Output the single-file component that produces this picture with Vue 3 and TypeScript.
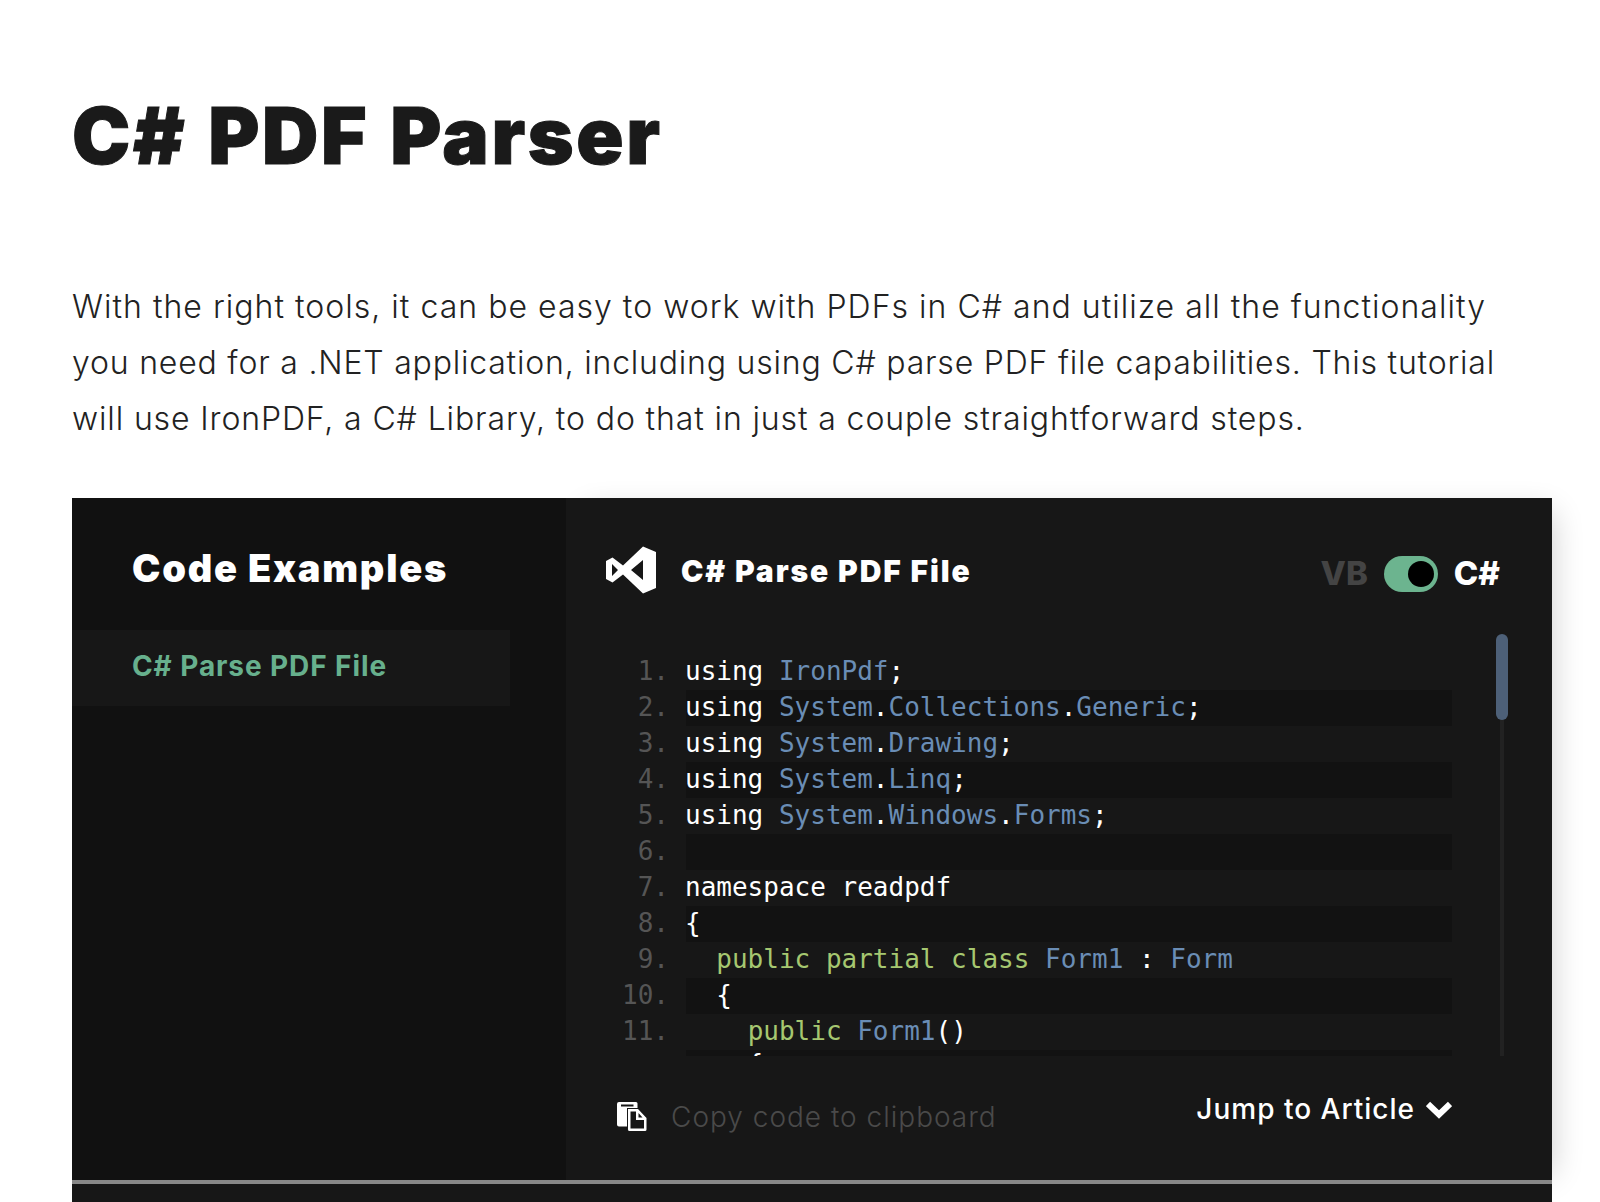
<script setup lang="ts">
type Token = { t: string; c: string };
const W = "w", B = "b", G = "g";
const lines: Token[][] = [
  [{ t: "using ", c: W }, { t: "IronPdf", c: B }, { t: ";", c: W }],
  [{ t: "using ", c: W }, { t: "System", c: B }, { t: ".", c: W }, { t: "Collections", c: B }, { t: ".", c: W }, { t: "Generic", c: B }, { t: ";", c: W }],
  [{ t: "using ", c: W }, { t: "System", c: B }, { t: ".", c: W }, { t: "Drawing", c: B }, { t: ";", c: W }],
  [{ t: "using ", c: W }, { t: "System", c: B }, { t: ".", c: W }, { t: "Linq", c: B }, { t: ";", c: W }],
  [{ t: "using ", c: W }, { t: "System", c: B }, { t: ".", c: W }, { t: "Windows", c: B }, { t: ".", c: W }, { t: "Forms", c: B }, { t: ";", c: W }],
  [],
  [{ t: "namespace readpdf", c: W }],
  [{ t: "{", c: W }],
  [{ t: "  ", c: W }, { t: "public partial class ", c: G }, { t: "Form1", c: B }, { t: " : ", c: W }, { t: "Form", c: B }],
  [{ t: "  {", c: W }],
  [{ t: "    ", c: W }, { t: "public ", c: G }, { t: "Form1", c: B }, { t: "()", c: W }],
  [{ t: "    {", c: "w peek" }],
];
</script>

<template>
  <div class="page">
    <h1 class="title">C# PDF Parser</h1>
    <p class="intro">
      <span class="l1">With the right tools, it can be easy to work with PDFs in C# and utilize all the functionality</span><br />
      <span class="l2">you need for a .NET application, including using C# parse PDF file capabilities. This tutorial</span><br />
      <span class="l3">will use IronPDF, a C# Library, to do that in just a couple straightforward steps.</span>
    </p>
    <section class="panel">
      <aside class="side">
        <h2 class="side-title">Code Examples</h2>
        <div class="side-item">C# Parse PDF File</div>
      </aside>
      <div class="main">
        <header class="head">
          <svg class="vs" width="50" height="48" viewBox="0 0 50 48">
            <path fill="#fff" fill-rule="evenodd" d="M37 0.5 L50 6 V42 L37 47.5 L17 28.500 L6.500 36.500 L0 33 V15 L6.500 11.500 L17 19.500 Z M37 14 L25 24 L37 34 Z M6 18 V30 L12 24 Z" />
          </svg>
          <h3 class="head-title">C# Parse PDF File</h3>
          <div class="switch">
            <span class="vb">VB</span>
            <span class="toggle"><span class="knob"></span></span>
            <span class="cs">C#</span>
          </div>
        </header>
        <div class="code-wrap">
          <div class="code">
            <div v-for="(line, i) in lines" :key="i" class="row">
              <span class="num">{{ i + 1 }}.</span>
              <span class="src" :class="{ odd: i % 2 === 1 }"><span v-for="(tok, j) in line" :key="j" :class="tok.c">{{ tok.t }}</span></span>
            </div>
          </div>
          <div class="track"><div class="thumb"></div></div>
        </div>
        <footer class="foot">
          <svg class="copy" width="30" height="29" viewBox="0 0 30 29">
            <path fill="#fff" d="M2 0 H19 Q20.500 0 20.500 1.500 V6 H10 V24.500 H2 Q0 24.500 0 22.500 V2 Q0 0 2 0 Z" />
            <rect x="4" y="2.500" width="12.500" height="2" fill="#171717" />
            <path fill="#fff" fill-rule="evenodd" d="M11 7 H21 L29.500 16 V27.500 Q29.500 29 28 29 H12.500 Q11 29 11 27.500 Z M13.500 9.500 V26.500 H27 V18 H19 V9.500 Z M21.500 11 V15.500 H25.500 Z" />
          </svg>
          <span class="copy-text">Copy code to clipboard</span>
          <span class="jump">Jump to Article
            <svg class="chev" width="26" height="18" viewBox="0 0 26 18"><path fill="none" stroke="#fff" stroke-width="6" d="M2 3 L13 13.500 L24 3" /></svg>
          </span>
        </footer>
      </div>
    </section>
    <div class="rule"></div>
    <div class="below"></div>
  </div>
</template>

<style scoped>
.page {
  box-sizing: border-box;
  height: 1202px;
  overflow: hidden;
  padding: 0 48px 0 72px;
  background: #fff;
  font-family: Inter, "Liberation Sans", sans-serif;
}
.title {
  margin: 0;
  padding-top: 88px;
  height: 194px;
  box-sizing: border-box;
  font-size: 78px;
  line-height: 96px;
  font-weight: 900;
  letter-spacing: 2.600px;
  word-spacing: 3px;
  -webkit-text-stroke: 1px #1a1a1a;
  color: #1a1a1a;
}
.intro {
  margin: 0;
  padding-top: 85px;
  height: 304px;
  box-sizing: border-box;
  font-size: 32px;
  line-height: 56px;
  font-weight: 300;
  color: #222;
  white-space: nowrap;
}
.l1 {
  letter-spacing: 1.020px;
}
.l2 {
  letter-spacing: 0.800px;
}
.l3 {
  letter-spacing: 0.880px;
}
.panel {
  display: flex;
  height: 682px;
}
.side {
  position: relative;
  z-index: 1;
  width: 494px;
  flex: none;
  background: #111;
}
.side-title {
  margin: 0;
  padding: 47px 0 0 60px;
  height: 132px;
  box-sizing: border-box;
  font-size: 38px;
  line-height: 46px;
  font-weight: 900;
  letter-spacing: 1.750px;
  color: #fff;
}
.side-item {
  width: 438px;
  height: 76px;
  padding-left: 60px;
  box-sizing: border-box;
  background: #171717;
  color: #67b08d;
  font-size: 28px;
  line-height: 72px;
  font-weight: 700;
  letter-spacing: 0.900px;
}
.main {
  flex: 1;
  min-width: 0;
  background: #171717;
  box-shadow: 10px 4px 30px -10px rgba(0, 0, 0, 0.2);
}
.head {
  display: flex;
  align-items: flex-start;
  height: 156px;
  box-sizing: border-box;
  padding: 48px 52px 0 40px;
}
.vs {
  flex: none;
}
.head-title {
  margin: 1px 0 0 25px;
  font-size: 30px;
  line-height: 48px;
  font-weight: 900;
  letter-spacing: 1.900px;
  color: #fff;
}
.switch {
  margin-left: auto;
  margin-top: 8px;
  display: flex;
  align-items: center;
  font-size: 33px;
  line-height: 36px;
  font-weight: 800;
}
.vb {
  color: #444;
}
.cs {
  color: #fff;
}
.toggle {
  display: flex;
  align-items: center;
  justify-content: flex-end;
  box-sizing: border-box;
  width: 54px;
  height: 36px;
  margin: 2px 16px 0;
  padding-right: 4px;
  border-radius: 18px;
  background: #6cb48f;
}
.knob {
  width: 26px;
  height: 26px;
  border-radius: 50%;
  background: #000;
}
.code-wrap {
  position: relative;
  height: 402px;
  padding-left: 48px;
}
.code {
  height: 402px;
  overflow: hidden;
  font-family: "DejaVu Sans Mono", monospace;
  font-size: 26px;
  line-height: 34px;
}
.row {
  display: flex;
  height: 36px;
}
.num {
  width: 55px;
  flex: none;
  text-align: right;
  color: #555;
}
.src {
  width: 766px;
  flex: none;
  margin-left: 17px;
  box-sizing: border-box;
  white-space: pre;
  text-indent: -1px;
}
.odd {
  background: #121212;
}
.w {
  color: #fff;
}
.b {
  color: #6a8db5;
}
.g {
  color: #a6c770;
}
.peek {
  position: relative;
  top: -3px;
}
.track {
  position: absolute;
  left: 934px;
  top: 0;
  bottom: 0;
  width: 4px;
  background: #222;
}
.thumb {
  position: absolute;
  left: -4px;
  top: -20px;
  width: 12px;
  height: 86px;
  border-radius: 6px;
  background: #4d6078;
}
.foot {
  position: relative;
  display: flex;
  align-items: flex-start;
  height: 124px;
  box-sizing: border-box;
  padding: 46px 100px 0 51px;
}
.copy {
  flex: none;
}
.copy-text {
  margin-left: 24px;
  margin-top: -2px;
  font-size: 28px;
  line-height: 34px;
  font-weight: 300;
  letter-spacing: 1px;
  color: #4a4a4a;
}
.jump {
  margin-left: auto;
  margin-top: -11px;
  display: flex;
  align-items: center;
  gap: 11px;
  font-size: 28px;
  line-height: 36px;
  font-weight: 500;
  letter-spacing: 1px;
  color: #fff;
}
.chev {
  flex: none;
  margin-top: 2px;
}
.rule {
  position: relative;
  height: 4px;
  background: #888;
}
.below {
  position: relative;
  height: 18px;
  background: #171717;
}
</style>
